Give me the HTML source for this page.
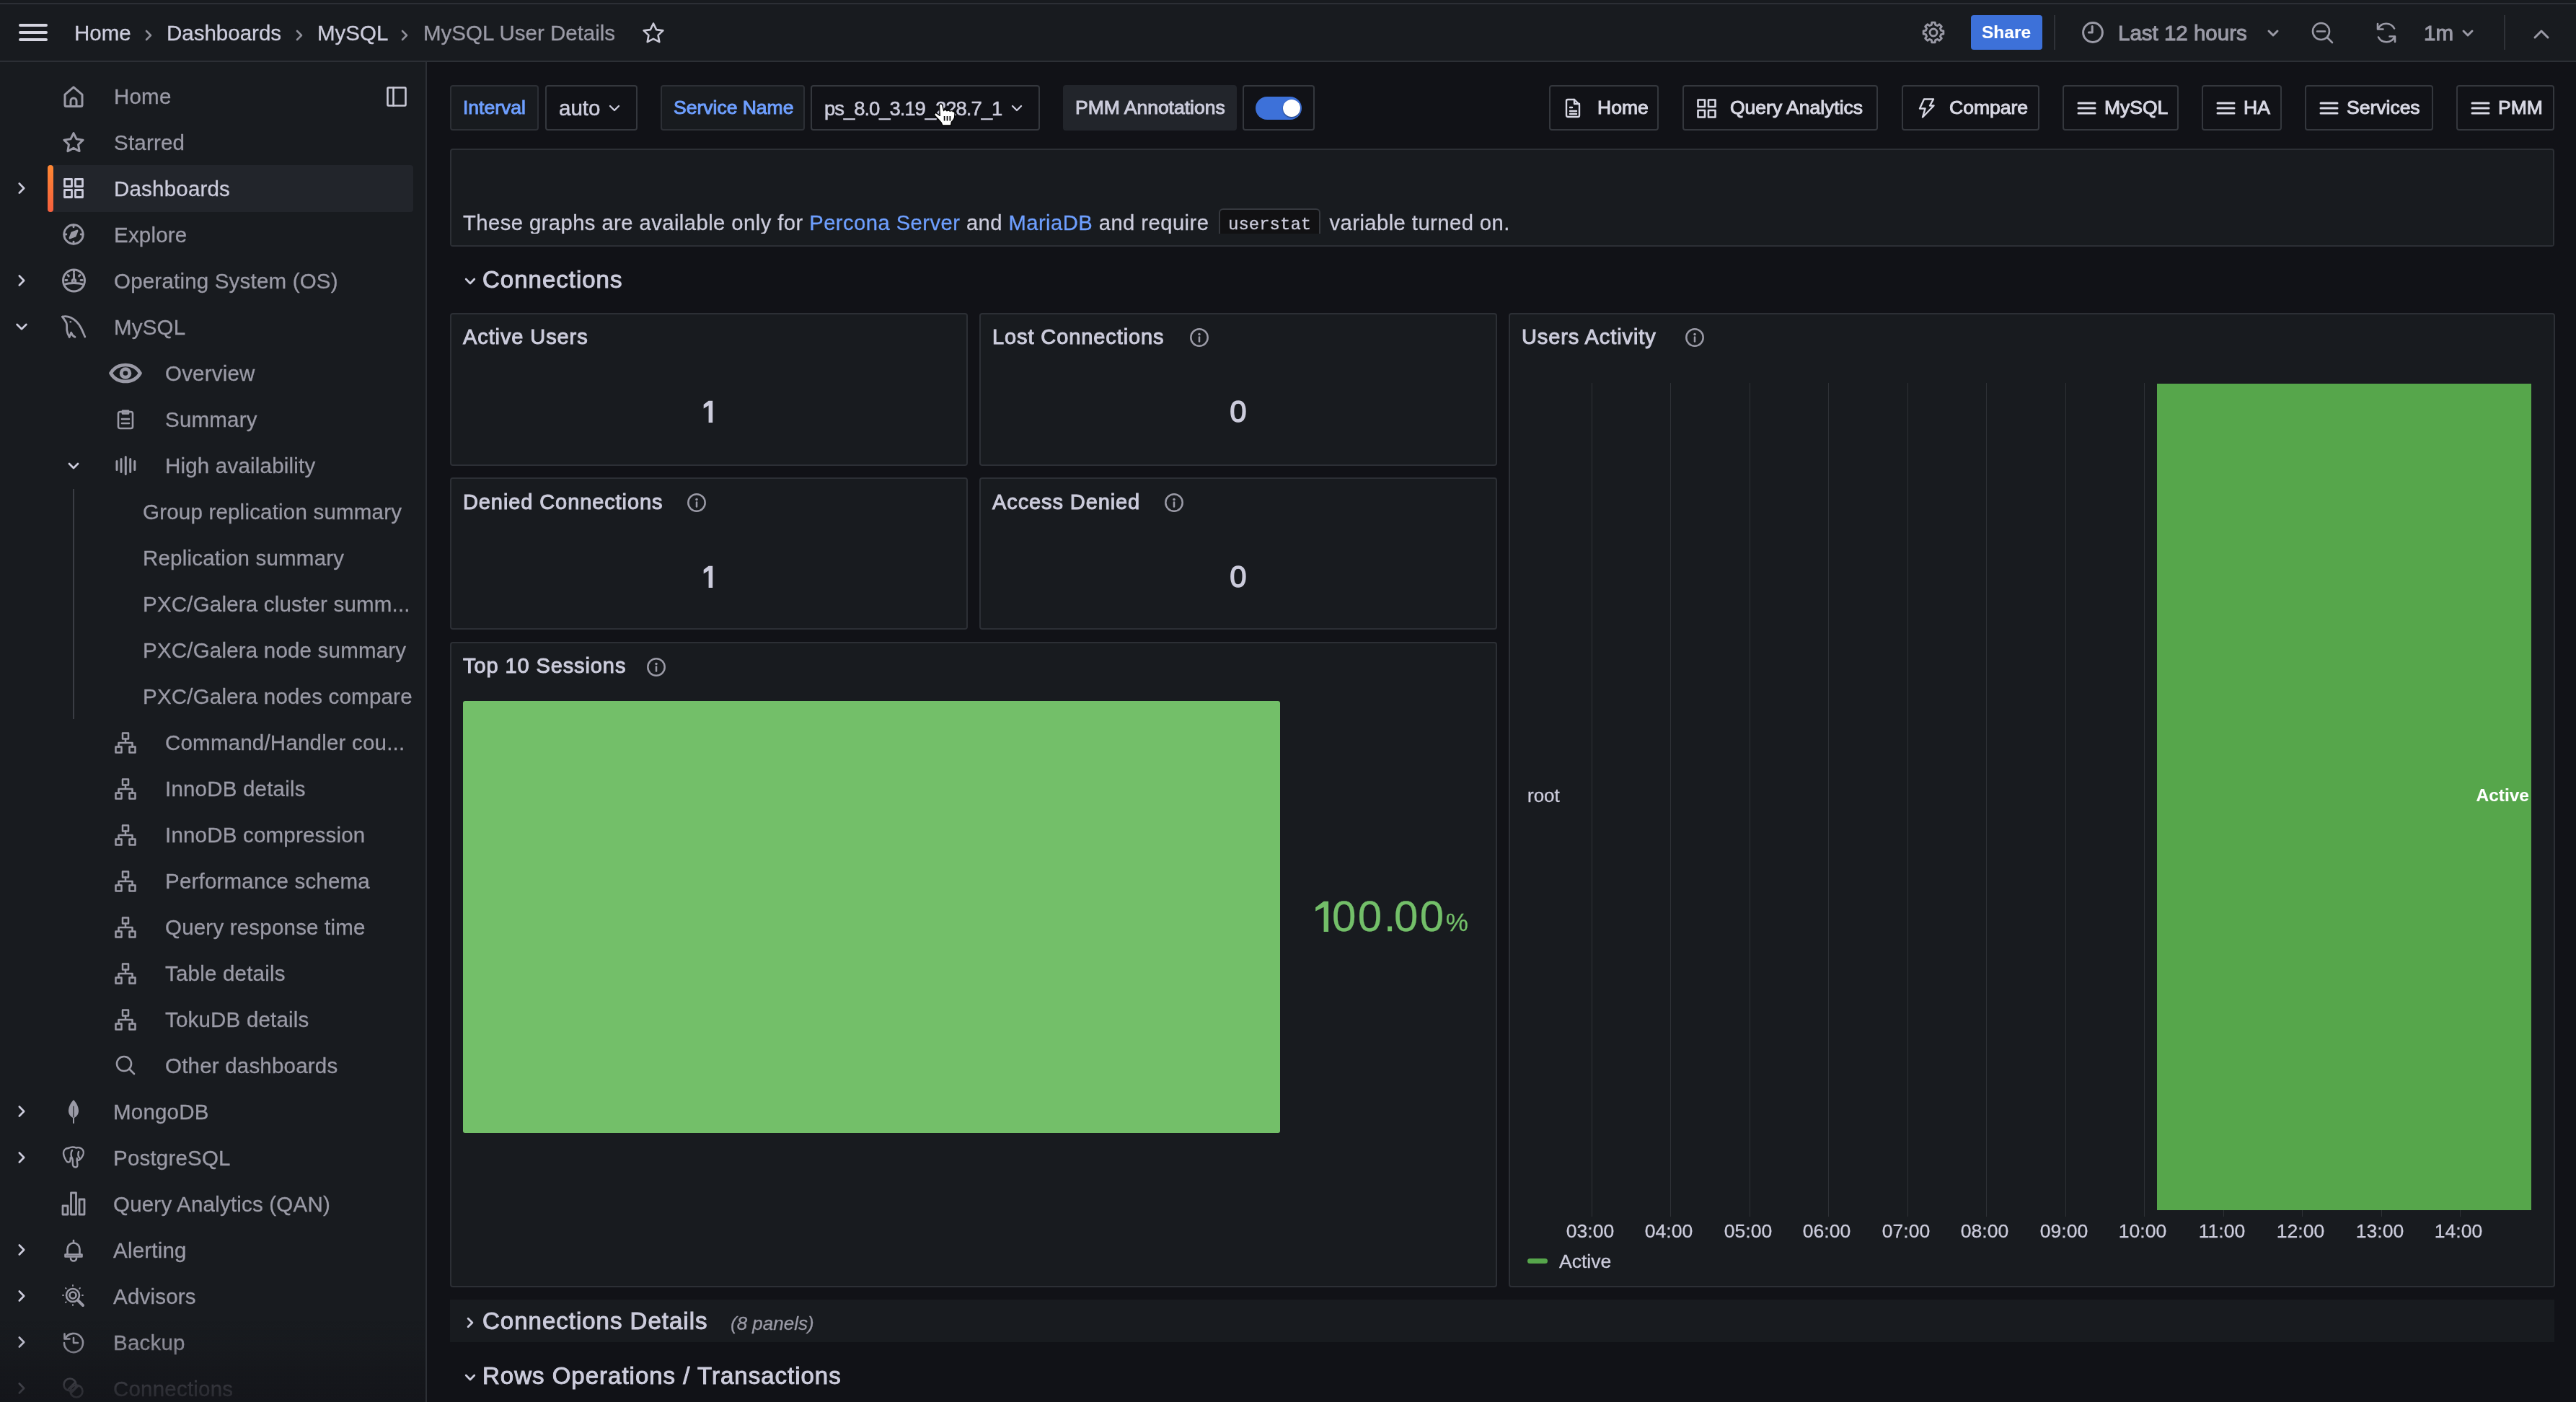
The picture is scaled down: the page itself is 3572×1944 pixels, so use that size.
<!DOCTYPE html><html><head><meta charset="utf-8"><title>MySQL User Details</title><style>
html,body{margin:0;padding:0;}
body{width:3572px;height:1944px;overflow:hidden;background:#111217;position:relative;font-family:"Liberation Sans",sans-serif;}
.a{position:absolute;}
.t{position:absolute;white-space:nowrap;will-change:transform;-webkit-text-stroke:0.3px currentColor;}
.t.md{-webkit-text-stroke:0.55px currentColor;}
.t.b{-webkit-text-stroke:0.1px currentColor;}
.t.v{-webkit-text-stroke:1.3px currentColor;}
.t.sb{-webkit-text-stroke:1.0px currentColor;}
svg{overflow:visible}
</style></head><body>
<div class="a" style="left:0px;top:0px;width:3572px;height:84px;background:#181b1f"></div>
<div class="a" style="left:0px;top:4px;width:3572px;height:2px;background:#2c2f35"></div>
<div class="a" style="left:0px;top:84px;width:3572px;height:2px;background:#2c2f35"></div>
<div class="a" style="left:26px;top:33px;width:40px;height:4px;background:#d5d5e0;border-radius:2px"></div>
<div class="a" style="left:26px;top:43px;width:40px;height:4px;background:#d5d5e0;border-radius:2px"></div>
<div class="a" style="left:26px;top:53px;width:40px;height:4px;background:#d5d5e0;border-radius:2px"></div>
<div class="t " style="left:103.0px;top:31.0px;font-size:29.5px;line-height:29.5px;color:#ccccdc;font-weight:normal;letter-spacing:0px;">Home</div>
<svg class="a" style="left:196px;top:39px;" width="20" height="20" viewBox="0 0 20 20" fill="none" stroke="#8e8f99" stroke-width="2.6" stroke-linecap="round" stroke-linejoin="round"><path d="M7.0 4.0 L13.0 10 L7.0 16.0"/></svg>
<div class="t " style="left:231.0px;top:31.0px;font-size:29.5px;line-height:29.5px;color:#ccccdc;font-weight:normal;letter-spacing:0px;">Dashboards</div>
<svg class="a" style="left:405px;top:39px;" width="20" height="20" viewBox="0 0 20 20" fill="none" stroke="#8e8f99" stroke-width="2.6" stroke-linecap="round" stroke-linejoin="round"><path d="M7.0 4.0 L13.0 10 L7.0 16.0"/></svg>
<div class="t " style="left:440.0px;top:31.0px;font-size:29.5px;line-height:29.5px;color:#ccccdc;font-weight:normal;letter-spacing:0px;">MySQL</div>
<svg class="a" style="left:551px;top:39px;" width="20" height="20" viewBox="0 0 20 20" fill="none" stroke="#8e8f99" stroke-width="2.6" stroke-linecap="round" stroke-linejoin="round"><path d="M7.0 4.0 L13.0 10 L7.0 16.0"/></svg>
<div class="t " style="left:587.0px;top:31.0px;font-size:29.5px;line-height:29.5px;color:#9a9aa6;font-weight:normal;letter-spacing:0px;">MySQL User Details</div>
<svg class="a" style="left:890px;top:30px;" width="32" height="31" viewBox="0 0 32 31" fill="none" stroke="#c9c9d6" stroke-width="2.6" stroke-linecap="round" stroke-linejoin="round"><path d="M16 2.5l4.1 8.6 9.3 1.3-6.8 6.5 1.7 9.3L16 23.8l-8.3 4.4 1.7-9.3-6.8-6.5 9.3-1.3z"/></svg>
<svg class="a" style="left:2666px;top:30px;" width="30" height="30" viewBox="0 0 30 30" fill="none" stroke="#9a9aa6" stroke-width="2.9" stroke-linecap="round" stroke-linejoin="round"><circle cx="15" cy="15" r="5"/><path d="M25.67 12.34 L28.83 12.81 L28.83 17.19 L25.67 17.66 L24.43 20.67 L26.33 23.23 L23.23 26.33 L20.67 24.43 L17.66 25.67 L17.19 28.83 L12.81 28.83 L12.34 25.67 L9.33 24.43 L6.77 26.33 L3.67 23.23 L5.57 20.67 L4.33 17.66 L1.17 17.19 L1.17 12.81 L4.33 12.34 L5.57 9.33 L3.67 6.77 L6.77 3.67 L9.33 5.57 L12.34 4.33 L12.81 1.17 L17.19 1.17 L17.66 4.33 L20.67 5.57 L23.23 3.67 L26.33 6.77 L24.43 9.33Z"/></svg>
<div class="a" style="left:2733px;top:21px;width:99px;height:48px;background:#3d71d9;border-radius:4px"></div>
<div class="t b" style="left:2782.0px;top:33.3px;font-size:24.5px;line-height:24.5px;color:#ffffff;font-weight:bold;letter-spacing:0px;transform:translateX(-50%);">Share</div>
<div class="a" style="left:2848px;top:21px;width:2px;height:48px;background:#2f3238"></div>
<svg class="a" style="left:2887px;top:30px;" width="30" height="30" viewBox="0 0 30 30" fill="none" stroke="#9a9aa6" stroke-width="3" stroke-linecap="round" stroke-linejoin="round"><circle cx="15" cy="15" r="13.4"/><path d="M14.2 6.5v8.5h-4.8"/></svg>
<div class="t sb" style="left:2937.0px;top:30.5px;font-size:29.5px;line-height:29.5px;color:#9a9aa6;font-weight:normal;letter-spacing:0px;">Last 12 hours</div>
<svg class="a" style="left:3142px;top:36px;" width="20" height="20" viewBox="0 0 20 20" fill="none" stroke="#9a9aa6" stroke-width="3" stroke-linecap="round" stroke-linejoin="round"><path d="M4.0 7.0 L10 13.0 L16.0 7.0"/></svg>
<svg class="a" style="left:3205px;top:30px;" width="31" height="31" viewBox="0 0 31 31" fill="none" stroke="#9a9aa6" stroke-width="2.6" stroke-linecap="round" stroke-linejoin="round"><circle cx="13.5" cy="13.5" r="11.5"/><path d="M8 13.5h11M22 22l7 7"/></svg>
<svg class="a" style="left:3293px;top:30px;" width="32" height="31" viewBox="0 0 32 31" fill="none" stroke="#9a9aa6" stroke-width="2.6" stroke-linecap="round" stroke-linejoin="round"><path d="M27 9.5A12.5 12.5 0 0 0 4.5 10"/><path d="M5 21.5A12.5 12.5 0 0 0 27.5 21"/><path d="M4 3v7.5h7.5"/><path d="M28 28v-7.5h-7.5"/></svg>
<div class="t sb" style="left:3361.0px;top:30.5px;font-size:29.5px;line-height:29.5px;color:#9a9aa6;font-weight:normal;letter-spacing:0px;">1m</div>
<svg class="a" style="left:3412px;top:36px;" width="20" height="20" viewBox="0 0 20 20" fill="none" stroke="#9a9aa6" stroke-width="3" stroke-linecap="round" stroke-linejoin="round"><path d="M4.0 7.0 L10 13.0 L16.0 7.0"/></svg>
<div class="a" style="left:3472px;top:21px;width:2px;height:48px;background:#2f3238"></div>
<svg class="a" style="left:3513px;top:41px;" width="22" height="13" viewBox="0 0 22 13" fill="none" stroke="#9a9aa6" stroke-width="3" stroke-linecap="round" stroke-linejoin="round"><path d="M2 11L11 2l9 9"/></svg>
<div class="a" style="left:0px;top:86px;width:590px;height:1858px;background:#181b1f"></div>
<div class="a" style="left:590px;top:86px;width:2px;height:1858px;background:#2c2f35"></div>
<svg class="a" style="left:536px;top:120px;" width="28" height="28" viewBox="0 0 28 28" fill="none" stroke="#c9c9d6" stroke-width="2.6" stroke-linecap="round" stroke-linejoin="round"><rect x="1.5" y="1.5" width="25" height="25" rx="1"/><path d="M9.5 1.5v25"/></svg>
<div class="a" style="left:66px;top:229px;width:507px;height:65px;background:#22252b;border-radius:4px"></div>
<div class="a" style="left:66px;top:229px;width:8px;height:65px;background:linear-gradient(180deg,#ff8833,#f55f3e);border-radius:4px"></div>
<div class="a" style="left:101px;top:678px;width:2px;height:319px;background:#3a3d44"></div>
<svg class="a" style="left:86.5px;top:118px;" width="30" height="32" viewBox="0 0 30 32" fill="none" stroke="#9a9aa6" stroke-width="3" stroke-linecap="round" stroke-linejoin="round"><path d="M3 13.2L15 2.8l12 10.4v14.3a2 2 0 0 1-2 2H5a2 2 0 0 1-2-2z"/><path d="M11 29.5V22a4 4 0 0 1 8 0v7.5"/></svg>
<div class="t " style="left:157.5px;top:119.0px;font-size:29.5px;line-height:29.5px;color:#9a9aa6;font-weight:normal;letter-spacing:0.2px;">Home</div>
<svg class="a" style="left:86.5px;top:182px;" width="30" height="30" viewBox="0 0 30 30" fill="none" stroke="#9a9aa6" stroke-width="3" stroke-linecap="round" stroke-linejoin="round"><path d="M15.00 2.60 L19.06 10.82 L28.12 12.14 L21.56 18.53 L23.11 27.56 L15.00 23.30 L6.89 27.56 L8.44 18.53 L1.88 12.14 L10.94 10.82Z"/></svg>
<div class="t " style="left:157.5px;top:183.0px;font-size:29.5px;line-height:29.5px;color:#9a9aa6;font-weight:normal;letter-spacing:0.2px;">Starred</div>
<svg class="a" style="left:20px;top:251px;" width="20" height="20" viewBox="0 0 20 20" fill="none" stroke="#ccccdc" stroke-width="2.6" stroke-linecap="round" stroke-linejoin="round"><path d="M6.8 3.5 L13.2 10 L6.8 16.5"/></svg>
<svg class="a" style="left:86.5px;top:246px;" width="30" height="30" viewBox="0 0 30 30" fill="none" stroke="#ccccdc" stroke-width="2.8" stroke-linecap="round" stroke-linejoin="round"><rect x="2.5" y="2.5" width="10" height="10"/><rect x="17.5" y="2.5" width="10" height="10"/><rect x="2.5" y="17.5" width="10" height="10"/><rect x="17.5" y="17.5" width="10" height="10"/></svg>
<div class="t " style="left:157.5px;top:247.0px;font-size:29.5px;line-height:29.5px;color:#ccccdc;font-weight:normal;letter-spacing:0.2px;">Dashboards</div>
<svg class="a" style="left:86.5px;top:310px;" width="30" height="30" viewBox="0 0 30 30" fill="none" stroke="#9a9aa6" stroke-width="2.9" stroke-linecap="round" stroke-linejoin="round"><circle cx="15" cy="15" r="13.2"/><path d="M20 10l-2.8 7.2-7.2 2.8 2.8-7.2z" fill="#9a9aa6"/><path d="M15 2v2.8M15 25.2V28M2 15h2.8M25.2 15H28"/></svg>
<div class="t " style="left:157.5px;top:311.0px;font-size:29.5px;line-height:29.5px;color:#9a9aa6;font-weight:normal;letter-spacing:0.2px;">Explore</div>
<svg class="a" style="left:20px;top:379px;" width="20" height="20" viewBox="0 0 20 20" fill="none" stroke="#ccccdc" stroke-width="2.6" stroke-linecap="round" stroke-linejoin="round"><path d="M6.8 3.5 L13.2 10 L6.8 16.5"/></svg>
<svg class="a" style="left:85.5px;top:372px;" width="33" height="34" viewBox="0 0 33 34" fill="none" stroke="#9a9aa6" stroke-width="2.9" stroke-linecap="round" stroke-linejoin="round"><circle cx="16.5" cy="17" r="15"/><path d="M16.5 7.5v7.5"/><circle cx="16.5" cy="17.8" r="2.3"/><path d="M3 22.5c4-1.5 9-2 13.5-2s9.5.5 13.5 2"/><path d="M8 9.5l1.4 1.4M25 9.5l-1.4 1.4M4.8 16.5h2.2M26 16.5h2.2M16.5 3.5v1.5"/></svg>
<div class="t " style="left:157.5px;top:375.0px;font-size:29.5px;line-height:29.5px;color:#9a9aa6;font-weight:normal;letter-spacing:0.2px;">Operating System (OS)</div>
<svg class="a" style="left:20px;top:443px;" width="20" height="20" viewBox="0 0 20 20" fill="none" stroke="#ccccdc" stroke-width="2.6" stroke-linecap="round" stroke-linejoin="round"><path d="M3.5 6.8 L10 13.2 L16.5 6.8"/></svg>
<svg class="a" style="left:84.0px;top:436px;" width="36" height="36" viewBox="0 0 36 36" fill="none" stroke="#9a9aa6" stroke-width="2.8" stroke-linecap="round" stroke-linejoin="round"><path d="M2.5 3.2C6.5 2 10.5 2.6 14.5 4.6C20.5 7.6 25.5 13 28.5 19C30.5 23 32 27 33.8 31"/><path d="M2.5 3.2C4.5 6.2 7.2 9 8.2 12.2C9.2 15.4 8.4 18.6 8.8 22.2C9.2 25.4 10.2 28.2 12.2 31.2"/><path d="M12.2 31.2C13.2 29.2 14.2 27.2 14.7 25.2C15.7 28.2 17.7 30.2 20 31.2"/><circle cx="13.8" cy="10.3" r="1.3" fill="#9a9aa6" stroke="none"/></svg>
<div class="t " style="left:157.5px;top:439.0px;font-size:29.5px;line-height:29.5px;color:#9a9aa6;font-weight:normal;letter-spacing:0.2px;">MySQL</div>
<svg class="a" style="left:150px;top:502px;" width="48" height="30" viewBox="0 0 48 30" fill="none" stroke="#9a9aa6" stroke-width="4.6" stroke-linecap="round" stroke-linejoin="round"><path d="M3.5 15.5C8.5 7 15.5 4 24 4s15.5 3 20.5 11.5C39.5 24 32.5 27 24 27S8.5 24 3.5 15.5z"/><circle cx="24" cy="15.5" r="5.8" stroke-width="5"/></svg>
<div class="t " style="left:229.0px;top:503.0px;font-size:29.5px;line-height:29.5px;color:#9a9aa6;font-weight:normal;letter-spacing:0.2px;">Overview</div>
<svg class="a" style="left:162px;top:566px;" width="24" height="30" viewBox="0 0 24 30" fill="none" stroke="#9a9aa6" stroke-width="2.6" stroke-linecap="round" stroke-linejoin="round"><rect x="2" y="5" width="20" height="23" rx="2.5"/><path d="M8 3.5h8v4H8z"/><path d="M7 15h10M7 21h10"/></svg>
<div class="t " style="left:229.0px;top:567.0px;font-size:29.5px;line-height:29.5px;color:#9a9aa6;font-weight:normal;letter-spacing:0.2px;">Summary</div>
<svg class="a" style="left:92px;top:636px;" width="20" height="20" viewBox="0 0 20 20" fill="none" stroke="#ccccdc" stroke-width="2.8" stroke-linecap="round" stroke-linejoin="round"><path d="M4.0 7.0 L10 13.0 L16.0 7.0"/></svg>
<svg class="a" style="left:159px;top:630px;" width="28" height="30" viewBox="0 0 28 30" fill="none" stroke="#9a9aa6" stroke-width="3" stroke-linecap="round" stroke-linejoin="round"><path d="M3 9.5v12M9 6.5v18M15.3 3.5v24M21.7 6.5v18M27.8 9.5v12"/></svg>
<div class="t " style="left:229.0px;top:631.0px;font-size:29.5px;line-height:29.5px;color:#9a9aa6;font-weight:normal;letter-spacing:0.2px;">High availability</div>
<div class="t " style="left:197.5px;top:695.0px;font-size:29.5px;line-height:29.5px;color:#9a9aa6;font-weight:normal;letter-spacing:0.2px;">Group replication summary</div>
<div class="t " style="left:197.5px;top:759.0px;font-size:29.5px;line-height:29.5px;color:#9a9aa6;font-weight:normal;letter-spacing:0.2px;">Replication summary</div>
<div class="t " style="left:197.5px;top:823.0px;font-size:29.5px;line-height:29.5px;color:#9a9aa6;font-weight:normal;letter-spacing:0.2px;">PXC/Galera cluster summ...</div>
<div class="t " style="left:197.5px;top:887.0px;font-size:29.5px;line-height:29.5px;color:#9a9aa6;font-weight:normal;letter-spacing:0.2px;">PXC/Galera node summary</div>
<div class="t " style="left:197.5px;top:951.0px;font-size:29.5px;line-height:29.5px;color:#9a9aa6;font-weight:normal;letter-spacing:0.2px;">PXC/Galera nodes compare</div>
<svg class="a" style="left:159px;top:1015px;" width="30" height="30" viewBox="0 0 30 30" fill="none" stroke="#9a9aa6" stroke-width="2.5" stroke-linecap="round" stroke-linejoin="round"><rect x="11" y="1.5" width="8" height="8"/><rect x="1.5" y="20.5" width="8" height="8"/><rect x="20.5" y="20.5" width="8" height="8"/><path d="M15 9.5v5.5M5.5 20.5v-5.5h19v5.5"/></svg>
<div class="t " style="left:229.0px;top:1015.0px;font-size:29.5px;line-height:29.5px;color:#9a9aa6;font-weight:normal;letter-spacing:0.2px;">Command/Handler cou...</div>
<svg class="a" style="left:159px;top:1079px;" width="30" height="30" viewBox="0 0 30 30" fill="none" stroke="#9a9aa6" stroke-width="2.5" stroke-linecap="round" stroke-linejoin="round"><rect x="11" y="1.5" width="8" height="8"/><rect x="1.5" y="20.5" width="8" height="8"/><rect x="20.5" y="20.5" width="8" height="8"/><path d="M15 9.5v5.5M5.5 20.5v-5.5h19v5.5"/></svg>
<div class="t " style="left:229.0px;top:1079.0px;font-size:29.5px;line-height:29.5px;color:#9a9aa6;font-weight:normal;letter-spacing:0.2px;">InnoDB details</div>
<svg class="a" style="left:159px;top:1143px;" width="30" height="30" viewBox="0 0 30 30" fill="none" stroke="#9a9aa6" stroke-width="2.5" stroke-linecap="round" stroke-linejoin="round"><rect x="11" y="1.5" width="8" height="8"/><rect x="1.5" y="20.5" width="8" height="8"/><rect x="20.5" y="20.5" width="8" height="8"/><path d="M15 9.5v5.5M5.5 20.5v-5.5h19v5.5"/></svg>
<div class="t " style="left:229.0px;top:1143.0px;font-size:29.5px;line-height:29.5px;color:#9a9aa6;font-weight:normal;letter-spacing:0.2px;">InnoDB compression</div>
<svg class="a" style="left:159px;top:1207px;" width="30" height="30" viewBox="0 0 30 30" fill="none" stroke="#9a9aa6" stroke-width="2.5" stroke-linecap="round" stroke-linejoin="round"><rect x="11" y="1.5" width="8" height="8"/><rect x="1.5" y="20.5" width="8" height="8"/><rect x="20.5" y="20.5" width="8" height="8"/><path d="M15 9.5v5.5M5.5 20.5v-5.5h19v5.5"/></svg>
<div class="t " style="left:229.0px;top:1207.0px;font-size:29.5px;line-height:29.5px;color:#9a9aa6;font-weight:normal;letter-spacing:0.2px;">Performance schema</div>
<svg class="a" style="left:159px;top:1271px;" width="30" height="30" viewBox="0 0 30 30" fill="none" stroke="#9a9aa6" stroke-width="2.5" stroke-linecap="round" stroke-linejoin="round"><rect x="11" y="1.5" width="8" height="8"/><rect x="1.5" y="20.5" width="8" height="8"/><rect x="20.5" y="20.5" width="8" height="8"/><path d="M15 9.5v5.5M5.5 20.5v-5.5h19v5.5"/></svg>
<div class="t " style="left:229.0px;top:1271.0px;font-size:29.5px;line-height:29.5px;color:#9a9aa6;font-weight:normal;letter-spacing:0.2px;">Query response time</div>
<svg class="a" style="left:159px;top:1335px;" width="30" height="30" viewBox="0 0 30 30" fill="none" stroke="#9a9aa6" stroke-width="2.5" stroke-linecap="round" stroke-linejoin="round"><rect x="11" y="1.5" width="8" height="8"/><rect x="1.5" y="20.5" width="8" height="8"/><rect x="20.5" y="20.5" width="8" height="8"/><path d="M15 9.5v5.5M5.5 20.5v-5.5h19v5.5"/></svg>
<div class="t " style="left:229.0px;top:1335.0px;font-size:29.5px;line-height:29.5px;color:#9a9aa6;font-weight:normal;letter-spacing:0.2px;">Table details</div>
<svg class="a" style="left:159px;top:1399px;" width="30" height="30" viewBox="0 0 30 30" fill="none" stroke="#9a9aa6" stroke-width="2.5" stroke-linecap="round" stroke-linejoin="round"><rect x="11" y="1.5" width="8" height="8"/><rect x="1.5" y="20.5" width="8" height="8"/><rect x="20.5" y="20.5" width="8" height="8"/><path d="M15 9.5v5.5M5.5 20.5v-5.5h19v5.5"/></svg>
<div class="t " style="left:229.0px;top:1399.0px;font-size:29.5px;line-height:29.5px;color:#9a9aa6;font-weight:normal;letter-spacing:0.2px;">TokuDB details</div>
<svg class="a" style="left:160px;top:1463px;" width="28" height="28" viewBox="0 0 28 28" fill="none" stroke="#9a9aa6" stroke-width="2.6" stroke-linecap="round" stroke-linejoin="round"><circle cx="12" cy="12" r="10"/><path d="M19.5 19.5l6.5 6.5"/></svg>
<div class="t " style="left:229.0px;top:1463.0px;font-size:29.5px;line-height:29.5px;color:#9a9aa6;font-weight:normal;letter-spacing:0.2px;">Other dashboards</div>
<svg class="a" style="left:20px;top:1531px;" width="20" height="20" viewBox="0 0 20 20" fill="none" stroke="#ccccdc" stroke-width="2.6" stroke-linecap="round" stroke-linejoin="round"><path d="M6.8 3.5 L13.2 10 L6.8 16.5"/></svg>
<svg class="a" style="left:92.5px;top:1524px;" width="18" height="34" viewBox="0 0 18 34" fill="none" stroke="#9a9aa6" stroke-width="2" stroke-linecap="round" stroke-linejoin="round"><path d="M9 1C4 6 2 12 2 16.5c0 5 3.5 8.5 7 10 3.5-1.5 7-5 7-10C16 12 14 6 9 1z" fill="#9a9aa6" stroke="none"/><path d="M9 10v23" stroke="#181b1f" stroke-width="1.2"/><path d="M9 26v7" stroke-width="2"/></svg>
<div class="t " style="left:156.5px;top:1527.0px;font-size:29.5px;line-height:29.5px;color:#9a9aa6;font-weight:normal;letter-spacing:0.2px;">MongoDB</div>
<svg class="a" style="left:20px;top:1595px;" width="20" height="20" viewBox="0 0 20 20" fill="none" stroke="#ccccdc" stroke-width="2.6" stroke-linecap="round" stroke-linejoin="round"><path d="M6.8 3.5 L13.2 10 L6.8 16.5"/></svg>
<svg class="a" style="left:85.5px;top:1588px;" width="32" height="34" viewBox="0 0 32 34" fill="none" stroke="#9a9aa6" stroke-width="2.4" stroke-linecap="round" stroke-linejoin="round"><path d="M9 4C4.5 4 2 7 2 11c0 4 2 7 3.5 10 1 2 3 3 5 2 1-.6 1.2-3 1.2-5.5M9 4c3-1.5 7-2 10.5-.5M19.5 3.5c3-1 7 0 9 2.5s1.5 7-1 10.5c-2 3-4 4.5-6 4.5M14 7c-2 3-2 8 0 11 1 1.5 1 4 .8 7 0 3 1 5.5 4 5.5 2.5 0 3-2.5 2.5-5s-1-5-.5-7.5M23 9c-1 3-1 6 1 8.5"/></svg>
<div class="t " style="left:156.5px;top:1591.0px;font-size:29.5px;line-height:29.5px;color:#9a9aa6;font-weight:normal;letter-spacing:0.2px;">PostgreSQL</div>
<svg class="a" style="left:84.5px;top:1652px;" width="34" height="34" viewBox="0 0 34 34" fill="none" stroke="#9a9aa6" stroke-width="2.8" stroke-linecap="round" stroke-linejoin="round"><rect x="2" y="20" width="7" height="12"/><rect x="13.5" y="2" width="7" height="30"/><rect x="25" y="11" width="7" height="21"/></svg>
<div class="t " style="left:156.5px;top:1655.0px;font-size:29.5px;line-height:29.5px;color:#9a9aa6;font-weight:normal;letter-spacing:0.2px;">Query Analytics (QAN)</div>
<svg class="a" style="left:20px;top:1723px;" width="20" height="20" viewBox="0 0 20 20" fill="none" stroke="#ccccdc" stroke-width="2.6" stroke-linecap="round" stroke-linejoin="round"><path d="M6.8 3.5 L13.2 10 L6.8 16.5"/></svg>
<svg class="a" style="left:88.5px;top:1718px;" width="26" height="30" viewBox="0 0 26 30" fill="none" stroke="#9a9aa6" stroke-width="2.6" stroke-linecap="round" stroke-linejoin="round"><path d="M4.5 21.5V14a8.5 8.5 0 0 1 17 0v7.5"/><path d="M1.5 21.5h23v3h-23z"/><path d="M9 26.5a4 4 0 0 0 8 0"/><path d="M13 2v3"/></svg>
<div class="t " style="left:156.5px;top:1719.0px;font-size:29.5px;line-height:29.5px;color:#9a9aa6;font-weight:normal;letter-spacing:0.2px;">Alerting</div>
<svg class="a" style="left:20px;top:1787px;" width="20" height="20" viewBox="0 0 20 20" fill="none" stroke="#ccccdc" stroke-width="2.6" stroke-linecap="round" stroke-linejoin="round"><path d="M6.8 3.5 L13.2 10 L6.8 16.5"/></svg>
<svg class="a" style="left:84.5px;top:1780px;" width="34" height="34" viewBox="0 0 34 34" fill="none" stroke="#9a9aa6" stroke-width="2.6" stroke-linecap="round" stroke-linejoin="round"><circle cx="16" cy="16" r="9"/><circle cx="16" cy="16" r="4.5"/><path d="M23 23l7 7" stroke-width="4"/><path d="M16 2v1M16 29v1M2 16h1M29 16h1M6 6l.7.7M26 6l-.7.7M6 26l.7-.7" stroke-width="1.8"/></svg>
<div class="t " style="left:156.5px;top:1783.0px;font-size:29.5px;line-height:29.5px;color:#9a9aa6;font-weight:normal;letter-spacing:0.2px;">Advisors</div>
<svg class="a" style="left:20px;top:1851px;" width="20" height="20" viewBox="0 0 20 20" fill="none" stroke="#ccccdc" stroke-width="2.6" stroke-linecap="round" stroke-linejoin="round"><path d="M6.8 3.5 L13.2 10 L6.8 16.5"/></svg>
<svg class="a" style="left:85.5px;top:1845px;" width="32" height="32" viewBox="0 0 32 32" fill="none" stroke="#9a9aa6" stroke-width="2.6" stroke-linecap="round" stroke-linejoin="round"><path d="M4.5 11A13 13 0 1 1 3 17"/><path d="M3.5 4.5v7h7"/><path d="M16 10v7h6"/></svg>
<div class="t " style="left:156.5px;top:1847.0px;font-size:29.5px;line-height:29.5px;color:#9a9aa6;font-weight:normal;letter-spacing:0.2px;">Backup</div>
<svg class="a" style="left:20px;top:1915px;" width="20" height="20" viewBox="0 0 20 20" fill="none" stroke="#ccccdc" stroke-width="2.6" stroke-linecap="round" stroke-linejoin="round"><path d="M6.8 3.5 L13.2 10 L6.8 16.5"/></svg>
<svg class="a" style="left:85.5px;top:1909px;" width="32" height="32" viewBox="0 0 32 32" fill="none" stroke="#9a9aa6" stroke-width="2.6" stroke-linecap="round" stroke-linejoin="round"><circle cx="11" cy="11" r="8.5"/><circle cx="20" cy="20" r="8.5"/><path d="M9 17l9-9M13 22l9-9"/></svg>
<div class="t " style="left:156.5px;top:1911.0px;font-size:29.5px;line-height:29.5px;color:#9a9aa6;font-weight:normal;letter-spacing:0.2px;">Connections</div>
<div class="a" style="left:0px;top:1830px;width:590px;height:114px;background:linear-gradient(180deg,rgba(20,21,26,0) 0%,rgba(20,21,26,0.1) 30%,rgba(20,21,26,0.62) 62%,rgba(20,21,26,0.8) 85%,rgba(20,21,26,0.85) 100%)"></div>
<div class="a" style="left:624px;top:118px;width:119px;height:59px;background:#181b1f;border:2px solid #2c2f35;border-radius:4px"></div>
<div class="t sb" style="left:642.0px;top:136.1px;font-size:26.5px;line-height:26.5px;color:#6e9fff;font-weight:normal;letter-spacing:0px;">Interval</div>
<div class="a" style="left:756px;top:118px;width:124px;height:59px;background:#111217;border:2px solid #34373d;border-radius:4px"></div>
<div class="t md" style="left:775.0px;top:135.0px;font-size:29.5px;line-height:29.5px;color:#ccccdc;font-weight:normal;letter-spacing:0px;">auto</div>
<svg class="a" style="left:842px;top:140px;" width="20" height="20" viewBox="0 0 20 20" fill="none" stroke="#ccccdc" stroke-width="2.4" stroke-linecap="round" stroke-linejoin="round"><path d="M4.0 7.0 L10 13.0 L16.0 7.0"/></svg>
<div class="a" style="left:916px;top:118px;width:196px;height:59px;background:#181b1f;border:2px solid #2c2f35;border-radius:4px"></div>
<div class="t sb" style="left:934.0px;top:136.1px;font-size:26.5px;line-height:26.5px;color:#6e9fff;font-weight:normal;letter-spacing:0px;">Service Name</div>
<div class="a" style="left:1124px;top:118px;width:314px;height:59px;background:#111217;border:2px solid #34373d;border-radius:4px"></div>
<div class="t md" style="left:1143.0px;top:136.7px;font-size:27.5px;line-height:27.5px;color:#ccccdc;font-weight:normal;letter-spacing:-1.05px;">ps_8.0_3.19_228.7_1</div>
<svg class="a" style="left:1400px;top:140px;" width="20" height="20" viewBox="0 0 20 20" fill="none" stroke="#ccccdc" stroke-width="2.4" stroke-linecap="round" stroke-linejoin="round"><path d="M4.0 7.0 L10 13.0 L16.0 7.0"/></svg>
<div class="a" style="left:1474px;top:118px;width:237px;height:59px;background:#22252b;border:2px solid #22252b;border-radius:4px"></div>
<div class="t sb" style="left:1491.0px;top:136.1px;font-size:26.5px;line-height:26.5px;color:#ccccdc;font-weight:normal;letter-spacing:0px;">PMM Annotations</div>
<div class="a" style="left:1723px;top:118px;width:96px;height:59px;background:#111217;border:2px solid #34373d;border-radius:4px"></div>
<div class="a" style="left:1741px;top:134px;width:64px;height:32px;background:#3d71d9;border-radius:16px"></div>
<div class="a" style="left:1779px;top:138px;width:24px;height:24px;background:#ffffff;border-radius:12px;box-shadow:0 1px 2px rgba(0,0,0,0.5)"></div>
<div class="a" style="left:2148px;top:118px;width:148px;height:59px;background:#111217;border:2px solid #34373d;border-radius:4px"></div>
<div class="t sb" style="left:2214.6px;top:136.1px;font-size:26.5px;line-height:26.5px;color:#d8d8e4;font-weight:normal;letter-spacing:0px;">Home</div>
<svg class="a" style="left:2170px;top:137px;" width="22" height="26" viewBox="0 0 22 26" fill="none" stroke="#d8d8e4" stroke-width="2.4" stroke-linecap="round" stroke-linejoin="round"><path d="M2 3a2 2 0 0 1 2-2h9l7 7v15a2 2 0 0 1-2 2H4a2 2 0 0 1-2-2z"/><path d="M13 1v6h7"/><path d="M7 12h3M7 17h9M7 21h9"/></svg>
<div class="a" style="left:2333px;top:118px;width:267px;height:59px;background:#111217;border:2px solid #34373d;border-radius:4px"></div>
<div class="t sb" style="left:2399.0px;top:136.1px;font-size:26.5px;line-height:26.5px;color:#d8d8e4;font-weight:normal;letter-spacing:0px;">Query Analytics</div>
<svg class="a" style="left:2353px;top:137px;" width="27" height="27" viewBox="0 0 27 27" fill="none" stroke="#d8d8e4" stroke-width="2.6" stroke-linecap="round" stroke-linejoin="round"><rect x="1.5" y="1.5" width="9.5" height="9.5"/><rect x="16" y="1.5" width="9.5" height="9.5"/><rect x="1.5" y="16" width="9.5" height="9.5"/><rect x="16" y="16" width="9.5" height="9.5"/></svg>
<div class="a" style="left:2637px;top:118px;width:187px;height:59px;background:#111217;border:2px solid #34373d;border-radius:4px"></div>
<div class="t sb" style="left:2703.0px;top:136.1px;font-size:26.5px;line-height:26.5px;color:#d8d8e4;font-weight:normal;letter-spacing:0px;">Compare</div>
<svg class="a" style="left:2660px;top:136px;" width="23" height="28" viewBox="0 0 23 28" fill="none" stroke="#d8d8e4" stroke-width="2.4" stroke-linecap="round" stroke-linejoin="round"><path d="M8 1.5h13l-5 9h5.5L6 26.5l3.5-12H2z"/></svg>
<div class="a" style="left:2860px;top:118px;width:157px;height:59px;background:#111217;border:2px solid #34373d;border-radius:4px"></div>
<div class="t sb" style="left:2918.0px;top:136.1px;font-size:26.5px;line-height:26.5px;color:#d8d8e4;font-weight:normal;letter-spacing:0px;">MySQL</div>
<svg class="a" style="left:2880px;top:140px;" width="27" height="20" viewBox="0 0 27 20" fill="none" stroke="#d8d8e4" stroke-width="3" stroke-linecap="round" stroke-linejoin="round"><path d="M2 3h23M2 10h23M2 17h23"/></svg>
<div class="a" style="left:3053px;top:118px;width:107px;height:59px;background:#111217;border:2px solid #34373d;border-radius:4px"></div>
<div class="t sb" style="left:3111.0px;top:136.1px;font-size:26.5px;line-height:26.5px;color:#d8d8e4;font-weight:normal;letter-spacing:0px;">HA</div>
<svg class="a" style="left:3073px;top:140px;" width="27" height="20" viewBox="0 0 27 20" fill="none" stroke="#d8d8e4" stroke-width="3" stroke-linecap="round" stroke-linejoin="round"><path d="M2 3h23M2 10h23M2 17h23"/></svg>
<div class="a" style="left:3196px;top:118px;width:174px;height:59px;background:#111217;border:2px solid #34373d;border-radius:4px"></div>
<div class="t sb" style="left:3254.0px;top:136.1px;font-size:26.5px;line-height:26.5px;color:#d8d8e4;font-weight:normal;letter-spacing:0px;">Services</div>
<svg class="a" style="left:3216px;top:140px;" width="27" height="20" viewBox="0 0 27 20" fill="none" stroke="#d8d8e4" stroke-width="3" stroke-linecap="round" stroke-linejoin="round"><path d="M2 3h23M2 10h23M2 17h23"/></svg>
<div class="a" style="left:3406px;top:118px;width:132px;height:59px;background:#111217;border:2px solid #34373d;border-radius:4px"></div>
<div class="t sb" style="left:3464.0px;top:136.1px;font-size:26.5px;line-height:26.5px;color:#d8d8e4;font-weight:normal;letter-spacing:0px;">PMM</div>
<svg class="a" style="left:3426px;top:140px;" width="27" height="20" viewBox="0 0 27 20" fill="none" stroke="#d8d8e4" stroke-width="3" stroke-linecap="round" stroke-linejoin="round"><path d="M2 3h23M2 10h23M2 17h23"/></svg>
<div class="a" style="left:624px;top:206px;width:2914px;height:132px;background:#181b1f;border:2px solid #2c2f35;border-radius:4px"></div>
<div class="t" style="left:642px;top:295.3px;font-size:29.2px;line-height:29.2px;color:#ccccdc;letter-spacing:0.45px">These graphs are available only for <span style="color:#6e9fff">Percona Server</span> and <span style="color:#6e9fff">MariaDB</span> and require <span style="display:inline-block;width:150px"></span> variable turned on.</div>
<div class="a" style="left:1690px;top:289px;width:137px;height:40px;border:2px solid #35383e;border-bottom:none;border-radius:6px 6px 0 0;background:#111113"></div>
<div class="t " style="left:1703.0px;top:299.7px;font-size:24px;line-height:24px;color:#ccccdc;font-weight:normal;letter-spacing:0px;font-family:'Liberation Mono',monospace;">userstat</div>
<div class="a" style="left:626px;top:324px;width:2914px;height:16px;background:#181b1f"></div>
<svg class="a" style="left:642px;top:380px;" width="20" height="20" viewBox="0 0 20 20" fill="none" stroke="#ccccdc" stroke-width="2.8" stroke-linecap="round" stroke-linejoin="round"><path d="M4.2 7.1 L10 12.9 L15.8 7.1"/></svg>
<div class="t sb" style="left:669.0px;top:371.1px;font-size:33px;line-height:33px;color:#ccccdc;font-weight:normal;letter-spacing:1.0px;">Connections</div>
<div class="a" style="left:624px;top:434px;width:714px;height:208px;background:#181b1f;border:2px solid #2c2f35;border-radius:4px"></div>
<div class="a" style="left:1358px;top:434px;width:714px;height:208px;background:#181b1f;border:2px solid #2c2f35;border-radius:4px"></div>
<div class="a" style="left:624px;top:662px;width:714px;height:207px;background:#181b1f;border:2px solid #2c2f35;border-radius:4px"></div>
<div class="a" style="left:1358px;top:662px;width:714px;height:207px;background:#181b1f;border:2px solid #2c2f35;border-radius:4px"></div>
<div class="a" style="left:624px;top:890px;width:1448px;height:891px;background:#181b1f;border:2px solid #2c2f35;border-radius:4px"></div>
<div class="a" style="left:2092px;top:434px;width:1447px;height:1347px;background:#181b1f;border:2px solid #2c2f35;border-radius:4px"></div>
<div class="t sb" style="left:642.0px;top:453.4px;font-size:29px;line-height:29px;color:#ccccdc;font-weight:normal;letter-spacing:0.9px;">Active Users</div>
<div class="t sb" style="left:1376.0px;top:453.4px;font-size:29px;line-height:29px;color:#ccccdc;font-weight:normal;letter-spacing:0.9px;">Lost Connections</div>
<svg class="a" style="left:1650px;top:455px;" width="26" height="26" viewBox="0 0 26 26" fill="none" stroke="#9a9aa6" stroke-width="2.5" stroke-linecap="round" stroke-linejoin="round"><circle cx="13" cy="13" r="11.7"/><path d="M13 12.6v5.8"/><circle cx="13" cy="8.6" r="1.75" fill="#9a9aa6" stroke="none"/></svg>
<div class="t sb" style="left:642.0px;top:682.4px;font-size:29px;line-height:29px;color:#ccccdc;font-weight:normal;letter-spacing:0.9px;">Denied Connections</div>
<svg class="a" style="left:953px;top:684px;" width="26" height="26" viewBox="0 0 26 26" fill="none" stroke="#9a9aa6" stroke-width="2.5" stroke-linecap="round" stroke-linejoin="round"><circle cx="13" cy="13" r="11.7"/><path d="M13 12.6v5.8"/><circle cx="13" cy="8.6" r="1.75" fill="#9a9aa6" stroke="none"/></svg>
<div class="t sb" style="left:1376.0px;top:682.4px;font-size:29px;line-height:29px;color:#ccccdc;font-weight:normal;letter-spacing:0.9px;">Access Denied</div>
<svg class="a" style="left:1615px;top:684px;" width="26" height="26" viewBox="0 0 26 26" fill="none" stroke="#9a9aa6" stroke-width="2.5" stroke-linecap="round" stroke-linejoin="round"><circle cx="13" cy="13" r="11.7"/><path d="M13 12.6v5.8"/><circle cx="13" cy="8.6" r="1.75" fill="#9a9aa6" stroke="none"/></svg>
<div class="t sb" style="left:642.0px;top:909.4px;font-size:29px;line-height:29px;color:#ccccdc;font-weight:normal;letter-spacing:0.9px;">Top 10 Sessions</div>
<svg class="a" style="left:897px;top:912px;" width="26" height="26" viewBox="0 0 26 26" fill="none" stroke="#9a9aa6" stroke-width="2.5" stroke-linecap="round" stroke-linejoin="round"><circle cx="13" cy="13" r="11.7"/><path d="M13 12.6v5.8"/><circle cx="13" cy="8.6" r="1.75" fill="#9a9aa6" stroke="none"/></svg>
<div class="t sb" style="left:2110.0px;top:453.4px;font-size:29px;line-height:29px;color:#ccccdc;font-weight:normal;letter-spacing:0.9px;">Users Activity</div>
<svg class="a" style="left:2337px;top:455px;" width="26" height="26" viewBox="0 0 26 26" fill="none" stroke="#9a9aa6" stroke-width="2.5" stroke-linecap="round" stroke-linejoin="round"><circle cx="13" cy="13" r="11.7"/><path d="M13 12.6v5.8"/><circle cx="13" cy="8.6" r="1.75" fill="#9a9aa6" stroke="none"/></svg>
<svg class="a" style="left:974px;top:554px" width="16" height="34" viewBox="0 0 16 34"><path d="M8.6 1.8H14.2V32H8.6V8.2L1.7 12.6V7.1Z" fill="#ccccdc"/></svg>
<div class="t v" style="left:1717.0px;top:550.4px;font-size:42px;line-height:42px;color:#ccccdc;font-weight:normal;letter-spacing:0px;transform:translateX(-50%);-webkit-text-stroke:1.3px currentColor;">0</div>
<svg class="a" style="left:974px;top:783px" width="16" height="34" viewBox="0 0 16 34"><path d="M8.6 1.8H14.2V32H8.6V8.2L1.7 12.6V7.1Z" fill="#ccccdc"/></svg>
<div class="t v" style="left:1717.0px;top:779.4px;font-size:42px;line-height:42px;color:#ccccdc;font-weight:normal;letter-spacing:0px;transform:translateX(-50%);-webkit-text-stroke:1.3px currentColor;">0</div>
<div class="a" style="left:642px;top:972px;width:1133px;height:599px;background:#73bf69;border-radius:3px"></div>
<svg class="a" style="left:1822px;top:1248px" width="22" height="46" viewBox="0 0 22 46"><path d="M13.6 1.7H20.1V44H13.6V9.8L2.2 15.6V10.2L13.6 1.7Z" fill="#73bf69"/></svg>
<div class="t" style="left:1847px;top:1241.2px;font-size:60px;line-height:60px;color:#73bf69;letter-spacing:2.5px">00<span style="letter-spacing:-2.5px">.</span>00<span style="font-size:35px;letter-spacing:0">%</span></div>
<div class="a" style="left:2207px;top:531px;width:1px;height:1156px;background:#2e3136"></div>
<div class="a" style="left:2316px;top:531px;width:1px;height:1156px;background:#2e3136"></div>
<div class="a" style="left:2426px;top:531px;width:1px;height:1156px;background:#2e3136"></div>
<div class="a" style="left:2535px;top:531px;width:1px;height:1156px;background:#2e3136"></div>
<div class="a" style="left:2645px;top:531px;width:1px;height:1156px;background:#2e3136"></div>
<div class="a" style="left:2754px;top:531px;width:1px;height:1156px;background:#2e3136"></div>
<div class="a" style="left:2864px;top:531px;width:1px;height:1156px;background:#2e3136"></div>
<div class="a" style="left:2973px;top:531px;width:1px;height:1156px;background:#2e3136"></div>
<div class="a" style="left:3083px;top:1677px;width:1px;height:10px;background:#2e3136"></div>
<div class="a" style="left:3192px;top:1677px;width:1px;height:10px;background:#2e3136"></div>
<div class="a" style="left:3302px;top:1677px;width:1px;height:10px;background:#2e3136"></div>
<div class="a" style="left:3411px;top:1677px;width:1px;height:10px;background:#2e3136"></div>
<div class="a" style="left:2991px;top:532px;width:519px;height:1146px;background:#56a64b"></div>
<div class="t " style="left:2118.0px;top:1090.0px;font-size:26px;line-height:26px;color:#ccccdc;font-weight:normal;letter-spacing:0px;">root</div>
<div class="t b" style="left:3507.0px;top:1091.3px;font-size:24.5px;line-height:24.5px;color:#ffffff;font-weight:bold;letter-spacing:0px;transform:translateX(-100%);">Active</div>
<div class="t " style="left:2205.0px;top:1693.6px;font-size:26.5px;line-height:26.5px;color:#ccccdc;font-weight:normal;letter-spacing:0px;transform:translateX(-50%);">03:00</div>
<div class="t " style="left:2314.0px;top:1693.6px;font-size:26.5px;line-height:26.5px;color:#ccccdc;font-weight:normal;letter-spacing:0px;transform:translateX(-50%);">04:00</div>
<div class="t " style="left:2424.0px;top:1693.6px;font-size:26.5px;line-height:26.5px;color:#ccccdc;font-weight:normal;letter-spacing:0px;transform:translateX(-50%);">05:00</div>
<div class="t " style="left:2533.0px;top:1693.6px;font-size:26.5px;line-height:26.5px;color:#ccccdc;font-weight:normal;letter-spacing:0px;transform:translateX(-50%);">06:00</div>
<div class="t " style="left:2643.0px;top:1693.6px;font-size:26.5px;line-height:26.5px;color:#ccccdc;font-weight:normal;letter-spacing:0px;transform:translateX(-50%);">07:00</div>
<div class="t " style="left:2752.0px;top:1693.6px;font-size:26.5px;line-height:26.5px;color:#ccccdc;font-weight:normal;letter-spacing:0px;transform:translateX(-50%);">08:00</div>
<div class="t " style="left:2862.0px;top:1693.6px;font-size:26.5px;line-height:26.5px;color:#ccccdc;font-weight:normal;letter-spacing:0px;transform:translateX(-50%);">09:00</div>
<div class="t " style="left:2971.0px;top:1693.6px;font-size:26.5px;line-height:26.5px;color:#ccccdc;font-weight:normal;letter-spacing:0px;transform:translateX(-50%);">10:00</div>
<div class="t " style="left:3081.0px;top:1693.6px;font-size:26.5px;line-height:26.5px;color:#ccccdc;font-weight:normal;letter-spacing:0px;transform:translateX(-50%);">11:00</div>
<div class="t " style="left:3190.0px;top:1693.6px;font-size:26.5px;line-height:26.5px;color:#ccccdc;font-weight:normal;letter-spacing:0px;transform:translateX(-50%);">12:00</div>
<div class="t " style="left:3300.0px;top:1693.6px;font-size:26.5px;line-height:26.5px;color:#ccccdc;font-weight:normal;letter-spacing:0px;transform:translateX(-50%);">13:00</div>
<div class="t " style="left:3409.0px;top:1693.6px;font-size:26.5px;line-height:26.5px;color:#ccccdc;font-weight:normal;letter-spacing:0px;transform:translateX(-50%);">14:00</div>
<div class="a" style="left:2118px;top:1745px;width:28px;height:7px;background:#56a64b;border-radius:4px"></div>
<div class="t " style="left:2162.0px;top:1735.6px;font-size:26.5px;line-height:26.5px;color:#ccccdc;font-weight:normal;letter-spacing:0px;">Active</div>
<div class="a" style="left:624px;top:1802px;width:2918px;height:59px;background:#181b1f"></div>
<svg class="a" style="left:642px;top:1824px;" width="20" height="20" viewBox="0 0 20 20" fill="none" stroke="#ccccdc" stroke-width="2.8" stroke-linecap="round" stroke-linejoin="round"><path d="M7.1 4.2 L12.9 10 L7.1 15.8"/></svg>
<div class="t sb" style="left:669.0px;top:1815.1px;font-size:33px;line-height:33px;color:#ccccdc;font-weight:normal;letter-spacing:1.0px;">Connections Details</div>
<div class="t " style="left:1013.0px;top:1822.0px;font-size:26px;line-height:26px;color:#9a9aa6;font-weight:normal;letter-spacing:0px;font-style:italic;">(8 panels)</div>
<svg class="a" style="left:642px;top:1900px;" width="20" height="20" viewBox="0 0 20 20" fill="none" stroke="#ccccdc" stroke-width="2.8" stroke-linecap="round" stroke-linejoin="round"><path d="M4.2 7.1 L10 12.9 L15.8 7.1"/></svg>
<div class="t sb" style="left:669.0px;top:1891.1px;font-size:33px;line-height:33px;color:#ccccdc;font-weight:normal;letter-spacing:1.0px;">Rows Operations / Transactions</div>
<svg class="a" style="left:1295px;top:143px;" width="30" height="32" viewBox="0 0 30 32" fill="none" stroke="#000" stroke-width="1.3" stroke-linecap="round" stroke-linejoin="round"><path d="M7.5 2.8C7.3 0.6 11.2 0.4 11.7 2.5L13.6 10.6C14.2 9 17.4 9 17.9 10.8C18.6 9.6 21.6 9.7 22.1 11.3C22.8 10.2 26.1 10.4 26.5 11.9C27.6 11.3 29.2 12.3 29 14.2L28.6 19.2C28.3 21.8 26.2 24.2 24.3 26.2L23.7 30.8H11.8L10.4 27.2C8 24.3 5.3 21.2 1.3 17.2C-0.2 15.6 1.6 12.7 3.7 14.1L8.4 17.4Z" fill="#ffffff" stroke="#000000" stroke-width="1.3"/><path d="M14.6 18v6.5M18.5 18v6.5M22.4 18v6.5" stroke="#000" stroke-width="1.7" stroke-linecap="butt"/></svg>
</body></html>
